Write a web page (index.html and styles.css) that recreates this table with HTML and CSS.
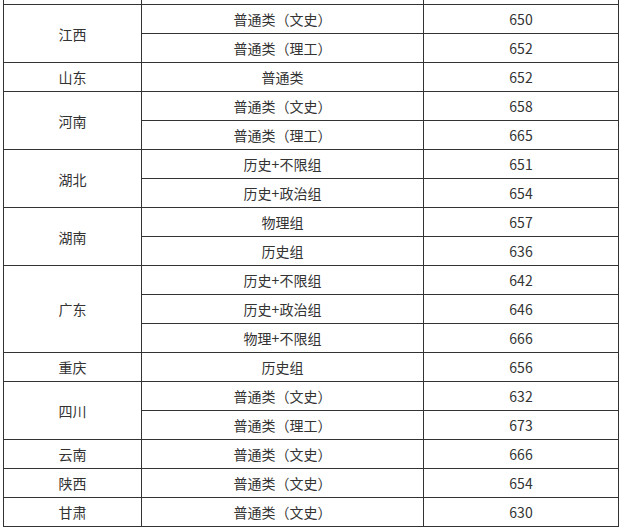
FILE: index.html
```html
<!DOCTYPE html>
<html lang="zh">
<head>
<meta charset="utf-8">
<link rel="stylesheet" href="styles.css">
</head>
<body>
<div class="wrap">
<table class="score">
<colgroup><col class="c1"><col class="c2"><col class="c3"></colgroup>
<tbody>
<tr class="prev"><td></td><td></td><td></td></tr>
<tr><td rowspan="2">江西</td><td>普通类（文史）</td><td>650</td></tr>
<tr><td>普通类（理工）</td><td>652</td></tr>
<tr><td>山东</td><td>普通类</td><td>652</td></tr>
<tr><td rowspan="2">河南</td><td>普通类（文史）</td><td>658</td></tr>
<tr><td>普通类（理工）</td><td>665</td></tr>
<tr><td rowspan="2">湖北</td><td>历史+不限组</td><td>651</td></tr>
<tr><td>历史+政治组</td><td>654</td></tr>
<tr><td rowspan="2">湖南</td><td>物理组</td><td>657</td></tr>
<tr><td>历史组</td><td>636</td></tr>
<tr><td rowspan="3">广东</td><td>历史+不限组</td><td>642</td></tr>
<tr><td>历史+政治组</td><td>646</td></tr>
<tr><td>物理+不限组</td><td>666</td></tr>
<tr><td>重庆</td><td>历史组</td><td>656</td></tr>
<tr><td rowspan="2">四川</td><td>普通类（文史）</td><td>632</td></tr>
<tr><td>普通类（理工）</td><td>673</td></tr>
<tr><td>云南</td><td>普通类（文史）</td><td>666</td></tr>
<tr><td>陕西</td><td>普通类（文史）</td><td>654</td></tr>
<tr><td>甘肃</td><td>普通类（文史）</td><td>630</td></tr>
</tbody>
</table>
</div>
</body>
</html>
```
FILE: styles.css
```css
html, body {
  margin: 0;
  padding: 0;
  background: #fff;
  overflow: hidden;
}
.wrap {
  padding-left: 3px;
}
.score {
  border-collapse: collapse;
  table-layout: fixed;
  width: 615px;
  margin-top: -25px;
  font-family: "Noto Sans CJK SC", "Noto Sans", sans-serif;
  font-size: 14px;
  color: #333;
}
.c1 { width: 138px; }
.c2 { width: 282px; }
.c3 { width: 195px; }
.score td {
  border: 1px solid #333;
  height: 28px;
  padding: 0;
  text-align: center;
  vertical-align: middle;
  line-height: 20px;
}
```
